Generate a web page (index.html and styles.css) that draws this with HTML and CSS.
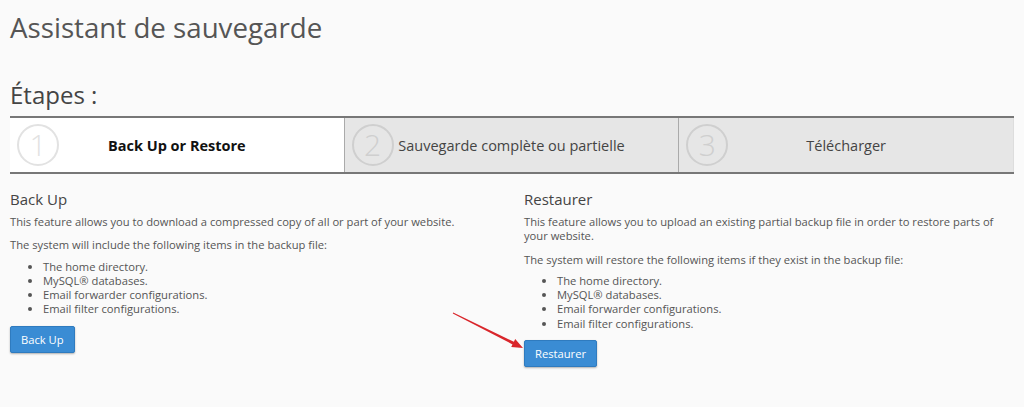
FILE: index.html
```html
<!DOCTYPE html>
<html lang="fr">
<head>
<meta charset="utf-8">
<title>Assistant de sauvegarde</title>
<link rel="stylesheet" href="styles.css">
</head>
<body>
<h1 class="page-title">Assistant de sauvegarde</h1>
<h2 class="steps-title">Étapes :</h2>
<div class="steps">
  <div class="step step-active">
    <span class="step-num">1</span>
    <span class="step-label step-label-bold">Back Up or Restore</span>
  </div>
  <div class="step">
    <span class="step-num">2</span>
    <span class="step-label">Sauvegarde complète ou partielle</span>
  </div>
  <div class="step">
    <span class="step-num">3</span>
    <span class="step-label">Télécharger</span>
  </div>
</div>
<div class="columns">
  <section class="col">
    <h3 class="col-title">Back Up</h3>
    <p class="text text-first">This feature allows you to download a compressed copy of all or part of your website.</p>
    <p class="text text-second">The system will include the following items in the backup file:</p>
    <ul class="items">
      <li>The home directory.</li>
      <li>MySQL® databases.</li>
      <li>Email forwarder configurations.</li>
      <li>Email filter configurations.</li>
    </ul>
    <button class="btn">Back Up</button>
  </section>
  <section class="col">
    <h3 class="col-title">Restaurer</h3>
    <p class="text text-first">This feature allows you to upload an existing partial backup file in order to restore parts of your website.</p>
    <p class="text text-second">The system will restore the following items if they exist in the backup file:</p>
    <ul class="items">
      <li>The home directory.</li>
      <li>MySQL® databases.</li>
      <li>Email forwarder configurations.</li>
      <li>Email filter configurations.</li>
    </ul>
    <button class="btn">Restaurer</button>
  </section>
</div>
<svg class="arrow" width="1024" height="407" viewBox="0 0 1024 407" aria-hidden="true">
  <polygon points="453.2,312.55 513.9,341.8 515.2,339.1 523,348 511.2,347.1 512.5,344.4 452.8,313.45" fill="#d9262b"/>
</svg>
</body>
</html>
```

FILE: styles.css
```css
html, body {
  margin: 0;
  padding: 0;
}
body {
  position: relative;
  background: #fafafa;
  font-family: "Open Sans", "DejaVu Sans", sans-serif;
  color: #555;
  padding: 0 10px;
  height: 407px;
  box-sizing: border-box;
  overflow: hidden;
}
.page-title {
  margin: 12px 0 0;
  font-size: 27.7px;
  line-height: 30px;
  font-weight: 400;
  color: #555;
}
.steps-title {
  margin: 40px 0 0;
  font-size: 24px;
  line-height: 26px;
  font-weight: 400;
  color: #444;
}
.steps {
  display: flex;
  margin-top: 8px;
  border-top: 2px solid #777;
  border-bottom: 2px solid #777;
  height: 54px;
}
.step {
  position: relative;
  flex: 1 1 0;
  display: flex;
  align-items: center;
  justify-content: center;
  background: #e6e6e6;
  border-left: 1px solid #aaa;
}
.step:last-child {
  border-right: 1px solid #ddd;
}
.step-active {
  background: #fff;
  border-left: none;
}
.step-num {
  position: absolute;
  left: 7px;
  top: 50%;
  transform: translateY(-50%);
  width: 38px;
  height: 38px;
  border: 2px solid #cfcfcf;
  border-radius: 50%;
  display: flex;
  align-items: center;
  justify-content: center;
  font-size: 30px;
  font-weight: 300;
  line-height: 1;
  color: #cfcfcf;
}
.step-active .step-num {
  border-color: #e2e2e2;
  color: #e2e2e2;
}
.step-label {
  font-size: 14.5px;
  color: #444;
}
.step-label-bold {
  font-weight: 700;
  color: #111;
}
.columns {
  display: grid;
  grid-template-columns: 1fr 1fr;
  column-gap: 24px;
  margin-top: 16px;
}
.col-title {
  margin: 0;
  font-size: 15px;
  line-height: 18px;
  font-weight: 400;
  color: #444;
}
.text {
  margin: 7px 0 0;
  font-size: 11.2px;
  line-height: 14.3px;
}
.text-second {
  margin-top: 9px;
}
.items {
  margin: 7px 0 0;
  padding-left: 33px;
  font-size: 11.2px;
  line-height: 14.3px;
}
.btn {
  display: block;
  margin-top: 9px;
  height: 27px;
  padding: 0 10px;
  border: 1px solid #2f7bbf;
  border-radius: 2px;
  background: #3a8cd4;
  color: #fff;
  font-family: "Open Sans", "DejaVu Sans", sans-serif;
  font-size: 11.2px;
  box-shadow: 0 1px 2px rgba(0,0,0,0.3);
}
.arrow {
  position: absolute;
  left: 0;
  top: 0;
  pointer-events: none;
}
```
